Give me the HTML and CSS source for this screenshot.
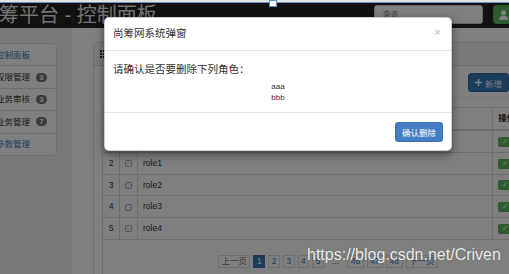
FILE: index.html
```html
<!DOCTYPE html>
<html>
<head>
  <meta charset="utf-8">
  <title>尚筹网 - 角色维护</title>
  <link rel="stylesheet" href="styles.css">
</head>
<body>
  <div class="capture-edge"></div>
  <div class="capture-handle"></div>

  <div class="screen">
    <div class="navbar">
      <a class="brand" href="#">尚筹平台 - 控制面板</a>
      <form class="nav-search">
        <input type="text" class="search-input" placeholder="查询">
        <button type="button" class="btn btn-success btn-user">
          <svg width="9" height="10" viewBox="0 0 9 10"><circle cx="4.5" cy="2.7" r="2.5" fill="currentColor"/><path d="M0 10C0 7 2 5.6 4.5 5.6S9 7 9 10z" fill="currentColor"/></svg>
          张三
        </button>
      </form>
    </div>

    <div class="layout">
      <div class="sidebar">
        <ul class="tree">
          <li class="tree-item"><a href="#">控制面板</a></li>
          <li class="tree-item"><span>权限管理</span><span class="badge">3</span></li>
          <li class="tree-item"><span>业务审核</span><span class="badge">3</span></li>
          <li class="tree-item"><span>业务管理</span><span class="badge">7</span></li>
          <li class="tree-item"><a href="#">参数管理</a></li>
        </ul>
      </div>

      <div class="main">
        <div class="panel">
          <div class="panel-heading">
            <svg width="8" height="8" viewBox="0 0 8 8" class="grid-icon"><path d="M0 0h2v2H0zM3 0h2v2H3zM6 0h2v2H6zM0 3h2v2H0zM3 3h2v2H3zM6 3h2v2H6zM0 6h2v2H0zM3 6h2v2H3zM6 6h2v2H6z" fill="currentColor"/></svg>
            数据列表
          </div>
          <div class="panel-body">
            <div class="toolbar">
              <button type="button" class="btn btn-primary">
                <svg width="7" height="7" viewBox="0 0 7 7"><path d="M2.7 0h1.6v2.7H7v1.6H4.3V7H2.7V4.3H0V2.7h2.7z" fill="currentColor"/></svg>
                新增
              </button>
              <button type="button" class="btn btn-danger">
                <svg width="7" height="7" viewBox="0 0 7 7"><path d="M1 1l5 5M6 1L1 6" stroke="currentColor" stroke-width="1.6"/></svg>
                删除
              </button>
            </div>
            <hr class="divider">
            <table class="table">
              <thead>
                <tr>
                  <th class="col-num">#</th>
                  <th class="col-check"><input type="checkbox" class="row-check"></th>
                  <th>名称</th>
                  <th class="col-ops">操作</th>
                </tr>
              </thead>
              <tbody>
                <tr>
                  <td class="col-num">1</td>
                  <td class="col-check"><input type="checkbox" class="row-check"></td>
                  <td>aaa</td>
                  <td class="col-ops">
                    <button type="button" class="btn-xs btn-success">&#10003;</button>
                    <button type="button" class="btn-xs btn-primary">&#9998;</button>
                    <button type="button" class="btn-xs btn-danger">&#10005;</button>
                  </td>
                </tr>
                <tr>
                  <td class="col-num">2</td>
                  <td class="col-check"><input type="checkbox" class="row-check"></td>
                  <td>role1</td>
                  <td class="col-ops">
                    <button type="button" class="btn-xs btn-success">&#10003;</button>
                    <button type="button" class="btn-xs btn-primary">&#9998;</button>
                    <button type="button" class="btn-xs btn-danger">&#10005;</button>
                  </td>
                </tr>
                <tr>
                  <td class="col-num">3</td>
                  <td class="col-check"><input type="checkbox" class="row-check"></td>
                  <td>role2</td>
                  <td class="col-ops">
                    <button type="button" class="btn-xs btn-success">&#10003;</button>
                    <button type="button" class="btn-xs btn-primary">&#9998;</button>
                    <button type="button" class="btn-xs btn-danger">&#10005;</button>
                  </td>
                </tr>
                <tr>
                  <td class="col-num">4</td>
                  <td class="col-check"><input type="checkbox" class="row-check"></td>
                  <td>role3</td>
                  <td class="col-ops">
                    <button type="button" class="btn-xs btn-success">&#10003;</button>
                    <button type="button" class="btn-xs btn-primary">&#9998;</button>
                    <button type="button" class="btn-xs btn-danger">&#10005;</button>
                  </td>
                </tr>
                <tr>
                  <td class="col-num">5</td>
                  <td class="col-check"><input type="checkbox" class="row-check"></td>
                  <td>role4</td>
                  <td class="col-ops">
                    <button type="button" class="btn-xs btn-success">&#10003;</button>
                    <button type="button" class="btn-xs btn-primary">&#9998;</button>
                    <button type="button" class="btn-xs btn-danger">&#10005;</button>
                  </td>
                </tr>
              </tbody>
              <tfoot>
                <tr>
                  <td colspan="4" class="pager-cell">
                    <ul class="pagination">
                      <li class="disabled"><a href="#">上一页</a></li>
                      <li class="active"><a href="#">1</a></li>
                      <li><a href="#">2</a></li>
                      <li><a href="#">3</a></li>
                      <li><a href="#">4</a></li>
                      <li><a href="#">5</a></li>
                      <li class="ellipsis"><span>...</span></li>
                      <li><a href="#">46</a></li>
                      <li><a href="#">47</a></li>
                      <li><a href="#">48</a></li>
                      <li><a href="#">下一页</a></li>
                    </ul>
                  </td>
                </tr>
              </tfoot>
            </table>
          </div>
        </div>
      </div>
    </div>

    <div class="modal-backdrop"></div>

    <div class="modal">
      <div class="modal-header">
        <h4 class="modal-title">尚筹网系统弹窗</h4>
        <button type="button" class="close">&times;</button>
      </div>
      <div class="modal-body">
        <p>请确认是否要删除下列角色：</p>
        <div class="role-names">
          <div>aaa</div>
          <div>bbb</div>
        </div>
      </div>
      <div class="modal-footer">
        <button type="button" class="btn btn-confirm">确认删除</button>
      </div>
    </div>
  </div>

  <div class="watermark">https://blog.csdn.net/Criven</div>
</body>
</html>
```

FILE: styles.css
```css
* {
  box-sizing: border-box;
}
body {
  margin: 0;
  width: 509px;
  height: 274px;
  overflow: hidden;
  position: relative;
  font-family: "Liberation Sans", "Noto Sans CJK SC", sans-serif;
  font-size: 8.5px;
  color: #333;
  background: #fff;
}
.capture-edge {
  height: 3px;
  background: #e2e2e2;
  border-bottom: 1px solid #6f95c4;
}
.capture-handle {
  position: absolute;
  left: 269px;
  top: 0;
  width: 8px;
  height: 7px;
  background: #fff;
  border: 1px solid #5d8ccc;
  z-index: 20;
}
.screen {
  position: relative;
  width: 600px;
  height: 271px;
}

/* navbar */
.navbar {
  display: flex;
  align-items: flex-start;
  height: 25px;
  padding: 2px 27px 0 0;
  background: #222;
}
.brand {
  margin: -2px 0 0 -21px;
  font-size: 20px;
  line-height: 25px;
  color: #e6e6e6;
  text-decoration: none;
  white-space: nowrap;
}
.nav-search {
  display: flex;
  gap: 10px;
  margin: 0 0 0 auto;
}
.search-input {
  width: 109px;
  height: 19px;
  padding: 0 8px;
  border: 1px solid #ccc;
  border-radius: 3px;
  font-family: inherit;
  font-size: 7.5px;
  background: #fff;
}
.search-input::placeholder {
  color: #888;
}
.btn {
  display: inline-flex;
  align-items: center;
  gap: 3px;
  height: 19px;
  padding: 0 6px;
  border: 1px solid transparent;
  border-radius: 3px;
  font-family: inherit;
  font-size: 8.5px;
  color: #fff;
  cursor: pointer;
}
.btn-user {
  width: 80px;
  gap: 4px;
  padding: 0 5px;
}
.btn-success {
  background: #5cb85c;
  border-color: #4cae4c;
  color: #fff;
}
.btn-primary {
  background: #337ab7;
  border-color: #2e6da4;
  color: #fff;
}
.btn-danger {
  background: #d9534f;
  border-color: #d43f3a;
  color: #fff;
}

/* layout */
.layout {
  display: flex;
  height: 246px;
}
.sidebar {
  width: 71px;
  flex-shrink: 0;
  padding-top: 15px;
  background: #f5f5f5;
  border-right: 1px solid #e8e8e8;
}
.tree {
  list-style: none;
  width: 69px;
  margin: 0 0 0 -12px;
  padding: 0;
}
.tree-item {
  display: flex;
  align-items: center;
  justify-content: space-between;
  padding: 4.7px 9px 4.7px 7px;
  margin-bottom: -1px;
  line-height: 12px;
  background: #fff;
  border: 1px solid #ddd;
  white-space: nowrap;
}
.tree-item:first-child {
  border-radius: 4px 4px 0 0;
}
.tree-item:last-child {
  border-radius: 0 0 4px 4px;
}
.tree-item a {
  color: #337ab7;
  text-decoration: none;
}
.badge {
  padding: 0 3px;
  min-width: 11px;
  line-height: 9px;
  font-size: 7px;
  font-weight: bold;
  text-align: center;
  color: #fff;
  background: #777;
  border-radius: 5px;
}
.main {
  flex: 1;
  padding: 14px 22px;
}

/* panel */
.panel {
  width: 470px;
  background: #fff;
  border: 1px solid #ddd;
  border-radius: 4px;
}
.panel-heading {
  display: flex;
  align-items: center;
  gap: 4px;
  padding: 5px 6px;
  line-height: 12px;
  background: #f5f5f5;
  border-bottom: 1px solid #ddd;
}
.panel-body {
  padding: 7px 8px 0;
}
.toolbar {
  display: flex;
  justify-content: flex-end;
  gap: 4px;
}
.divider {
  margin: 5px 0 9px;
  border: 0;
  border-top: 1px solid #eee;
}

/* table */
.table {
  width: 452px;
  border-collapse: collapse;
  border: 1px solid #ddd;
}
.table th,
.table td {
  padding: 5px 5px;
  line-height: 10.6px;
  text-align: left;
  border: 1px solid #ddd;
  white-space: nowrap;
}
.table th {
  line-height: 11px;
  border-bottom-width: 2px;
}
.table .col-num {
  width: 17px;
  padding: 5px 0;
  text-align: center;
}
.table .col-check {
  width: 18px;
  padding: 5px 0;
  text-align: center;
}
.table .col-ops {
  width: 57px;
  padding: 5px 5px;
  overflow: hidden;
}
.row-check {
  appearance: none;
  display: inline-block;
  width: 7px;
  height: 7px;
  margin: 0;
  vertical-align: middle;
  background: #f4f4f4;
  border: 1px solid #aaa;
  border-radius: 1.5px;
}
.btn-xs {
  height: 10px;
  width: 14px;
  padding: 0;
  margin-right: 1px;
  border: 1px solid transparent;
  border-radius: 2px;
  font-size: 7px;
  line-height: 8px;
  vertical-align: middle;
}
.pager-cell {
  text-align: center !important;
  padding: 0 !important;
  border: none !important;
}
.pagination {
  display: inline-flex;
  gap: 3px;
  margin: 15px 0 12px;
  padding: 0;
  list-style: none;
}
.pagination a,
.pagination span {
  display: block;
  padding: 0 2.5px;
  line-height: 11px;
  color: #337ab7;
  text-decoration: none;
  border: 1px solid #ddd;
  background: #fff;
}
.pagination .disabled a {
  color: #777;
}
.pagination .active a {
  color: #fff;
  background: #337ab7;
  border-color: #337ab7;
}
.pagination .ellipsis span {
  padding: 0 4px;
  border-color: transparent;
  color: #555;
}

/* modal */
.modal-backdrop {
  position: absolute;
  top: 0;
  left: 0;
  right: 0;
  bottom: 0;
  background: rgba(0, 0, 0, 0.5);
  z-index: 10;
}
.modal {
  position: absolute;
  left: 104px;
  top: 14px;
  width: 348px;
  background: #fff;
  border: 1px solid rgba(0, 0, 0, 0.2);
  border-radius: 5px;
  box-shadow: 0 3px 9px rgba(0, 0, 0, 0.5);
  z-index: 11;
}
.modal-header {
  display: flex;
  align-items: center;
  justify-content: space-between;
  padding: 9px 10px 10px 8px;
  border-bottom: 1px solid #e5e5e5;
}
.modal-title {
  margin: 0;
  font-size: 10.5px;
  line-height: 13px;
  font-weight: normal;
  color: #333;
}
.close {
  padding: 0;
  border: 0;
  background: none;
  font-family: inherit;
  font-size: 11px;
  font-weight: bold;
  line-height: 1;
  color: #000;
  opacity: 0.2;
  margin-top: -3px;
}
.modal-body {
  padding: 12px 8px 9px;
}
.modal-body p {
  margin: 0 0 5px;
  font-size: 10.5px;
  line-height: 13px;
}
.role-names {
  text-align: center;
  font-size: 8px;
  line-height: 11px;
}
.modal-footer {
  display: flex;
  justify-content: flex-end;
  padding: 9px 8px 8px;
  border-top: 1px solid #e5e5e5;
}
.btn-confirm {
  height: 20px;
  padding: 0 6px;
  background: #457ec2;
  border-color: #3b72b3;
}

.watermark {
  position: absolute;
  left: 307px;
  top: 246px;
  font-family: "Liberation Sans", sans-serif;
  font-size: 16px;
  line-height: 18px;
  color: rgba(255, 255, 255, 0.9);
  text-shadow: 0 0 1px rgba(0, 0, 0, 0.35);
  white-space: nowrap;
  z-index: 30;
}
```
